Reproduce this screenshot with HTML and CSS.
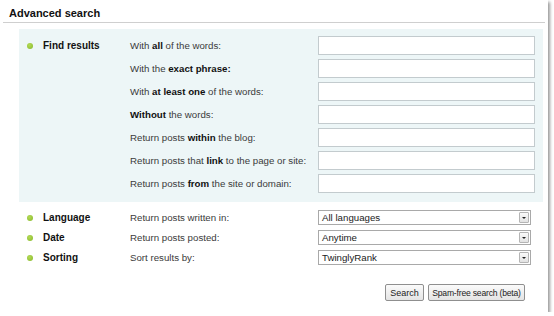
FILE: index.html
```html
<!DOCTYPE html>
<html lang="en">
<head>
    <meta charset="UTF-8">
    <meta name="viewport" content="width=device-width, initial-scale=1.0">
    <title>Advanced search</title>
    <link rel="stylesheet" href="styles.css">
</head>
<body>
    <div class="frame">
        <h2 class="title">Advanced search</h2>

        <div class="section find-box">
            <div class="section-head"><span class="bullet"></span>Find results</div>
            <div class="rows">
                <div class="row"><span class="desc">With <b>all</b> of the words:</span><input type="text" class="field"></div>
                <div class="row"><span class="desc">With the <b>exact phrase:</b></span><input type="text" class="field"></div>
                <div class="row"><span class="desc">With <b>at least one</b> of the words:</span><input type="text" class="field"></div>
                <div class="row"><span class="desc"><b>Without</b> the words:</span><input type="text" class="field"></div>
                <div class="row"><span class="desc">Return posts <b>within</b> the blog:</span><input type="text" class="field"></div>
                <div class="row"><span class="desc">Return posts that <b>link</b> to the page or site:</span><input type="text" class="field"></div>
                <div class="row"><span class="desc">Return posts <b>from</b> the site or domain:</span><input type="text" class="field"></div>
            </div>
        </div>

        <div class="options">
            <div class="option">
                <div class="section-head"><span class="bullet"></span>Language</div>
                <span class="desc">Return posts written in:</span>
                <div class="select"><span>All languages</span><span class="arrow"></span></div>
            </div>
            <div class="option">
                <div class="section-head"><span class="bullet"></span>Date</div>
                <span class="desc">Return posts posted:</span>
                <div class="select"><span>Anytime</span><span class="arrow"></span></div>
            </div>
            <div class="option">
                <div class="section-head"><span class="bullet"></span>Sorting</div>
                <span class="desc">Sort results by:</span>
                <div class="select"><span>TwinglyRank</span><span class="arrow"></span></div>
            </div>
        </div>

        <div class="actions">
            <button class="btn btn-search">Search</button>
            <button class="btn btn-spam">Spam-free search (beta)</button>
        </div>
    </div>
</body>
</html>
```

FILE: styles.css
```css
body {
    margin: 0;
    background: #ffffff;
    font-family: "Liberation Sans", Arial, sans-serif;
    font-size: 9.7px;
    color: #3a3a3a;
}

.frame {
    width: 548px;
    height: 312px;
    background: #ffffff;
    box-shadow: 2px 2px 3px rgba(0, 0, 0, 0.4);
    overflow: hidden;
}

.title {
    margin: 0 3px;
    padding: 7px 0 2px 6px;
    font-size: 11px;
    line-height: 13px;
    color: #111;
    border-bottom: 1px solid #cfcfcf;
}

.section {
    display: flex;
}

.find-box {
    margin: 6px 0 0 19px;
    width: 524px;
    padding: 7px 0 9px 0;
    background: #edf6f7;
}

.section-head {
    width: 103px;
    padding-left: 8px;
    height: 19px;
    display: flex;
    align-items: center;
    gap: 10px;
    font-size: 10px;
    font-weight: bold;
    color: #111;
}

.bullet {
    width: 6px;
    height: 6px;
    border-radius: 50%;
    background: radial-gradient(circle at 40% 35%, #b4da55, #86b82c);
}

.rows {
    display: flex;
    flex-direction: column;
    gap: 4px;
}

.row {
    display: flex;
    align-items: center;
    height: 19px;
}

.desc {
    width: 188px;
}

.desc b {
    color: #111;
}

.field {
    box-sizing: border-box;
    width: 217px;
    height: 19px;
    margin: 0;
    border: 1px solid #c3cbce;
    background: #ffffff;
}

.options {
    margin: 8px 0 0 19px;
    display: flex;
    flex-direction: column;
    gap: 5px;
}

.option {
    display: flex;
    align-items: center;
    height: 15px;
}

.option .section-head {
    height: 15px;
}

.select {
    box-sizing: border-box;
    width: 213px;
    height: 15px;
    border: 1px solid #a9a9a9;
    background: #ffffff;
    display: flex;
    align-items: center;
    justify-content: space-between;
    padding: 0 1px 0 3px;
    color: #222;
}

.arrow {
    box-sizing: border-box;
    width: 10px;
    height: 11px;
    border: 1px solid #b5b5b5;
    border-radius: 1px;
    background: linear-gradient(#fafafa, #e2e2e2);
    position: relative;
}

.arrow::after {
    content: "";
    position: absolute;
    left: 2px;
    top: 4px;
    border-left: 2px solid transparent;
    border-right: 2px solid transparent;
    border-top: 2px solid #222;
}

.actions {
    display: flex;
    justify-content: flex-end;
    gap: 4px;
    margin-top: 19px;
    padding-right: 23px;
}

.btn {
    box-sizing: border-box;
    height: 17px;
    padding: 0;
    border: 1px solid #8f8f8f;
    border-radius: 2px;
    background: linear-gradient(#fbfbfb, #e4e4e4);
    font-family: "Liberation Sans", Arial, sans-serif;
    font-size: 8.6px;
    color: #222;
    white-space: nowrap;
    cursor: pointer;
}

.btn-search {
    width: 39px;
    font-size: 9px;
}

.btn-spam {
    width: 97px;
    letter-spacing: -0.2px;
}
```
